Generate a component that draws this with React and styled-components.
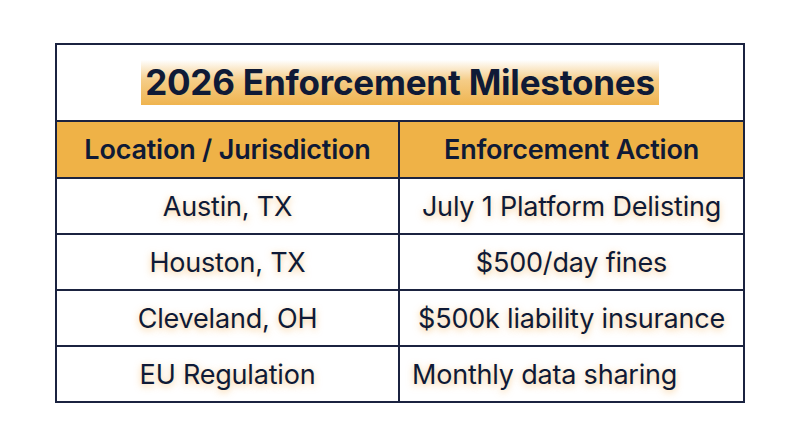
import { createGlobalStyle, styled } from "styled-components";

const rows = [
    { location: "Austin, TX", action: "July 1 Platform Delisting" },
    { location: "Houston, TX", action: "$500/day fines" },
    { location: "Cleveland, OH", action: "$500k liability insurance" },
    { location: "EU Regulation", action: "Monthly data sharing", left: true },
];

const App = () => {
    return (
        <>
            <GlobalStyle />
            <Page>
                <Table>
                    <TitleRow>
                        <Title>2026 Enforcement Milestones</Title>
                    </TitleRow>
                    <HeadRow>
                        <HeadCell>Location / Jurisdiction</HeadCell>
                        <HeadCell $last>Enforcement Action</HeadCell>
                    </HeadRow>
                    {rows.map((row) => (
                        <Row key={row.location}>
                            <Cell>{row.location}</Cell>
                            <Cell $last $left={row.left}>
                                {row.action}
                            </Cell>
                        </Row>
                    ))}
                </Table>
            </Page>
        </>
    );
};

const GlobalStyle = createGlobalStyle`
    body {
        margin: 0;
        background: #ffffff;
        font-family: Inter, "Noto Sans", sans-serif;
        color: #0f1a36;
    }
`;

const Page = styled.div`
    width: 800px;
    height: 447px;
    padding: 43px 0 0 55px;
    box-sizing: border-box;
`;

const Table = styled.div`
    width: 690px;
    border: 2px solid #1b2340;
    border-bottom: none;
    box-sizing: border-box;
    display: flex;
    flex-direction: column;
`;

const TitleRow = styled.div`
    height: 77px;
    box-sizing: border-box;
    display: flex;
    align-items: center;
    justify-content: center;
    border-bottom: 2px solid #1b2340;
`;

const Title = styled.h1`
    margin: 0;
    padding: 1px 4px 2px;
    font-size: 35px;
    font-weight: 700;
    line-height: 42px;
    letter-spacing: -0.2px;
    background: linear-gradient(to bottom, rgba(240, 180, 80, 0) 0%, rgba(241, 183, 84, 0.7) 45%, #efb44f 100%);
`;

const Row = styled.div`
    display: grid;
    grid-template-columns: 343px 1fr;
    height: 56px;
    box-sizing: border-box;
    border-bottom: 2px solid #1b2340;
`;

const HeadRow = styled(Row)`
    height: 57px;
    background: #efb247;
`;

const HeadCell = styled.div`
    display: flex;
    align-items: center;
    justify-content: center;
    font-size: 27px;
    font-weight: 600;
    letter-spacing: -0.2px;
    border-right: ${(p) => (p.$last ? "none" : "2px solid #1b2340")};
`;

const Cell = styled.div`
    display: flex;
    align-items: center;
    justify-content: ${(p) => (p.$left ? "flex-start" : "center")};
    padding-left: ${(p) => (p.$left ? "12px" : "0")};
    padding-top: 1px;
    font-size: 27px;
    font-weight: 400;
    letter-spacing: -0.2px;
    text-shadow: 0 2px 7px rgba(240, 165, 60, 0.6);
    border-right: ${(p) => (p.$last ? "none" : "2px solid #1b2340")};
`;

export default App;
